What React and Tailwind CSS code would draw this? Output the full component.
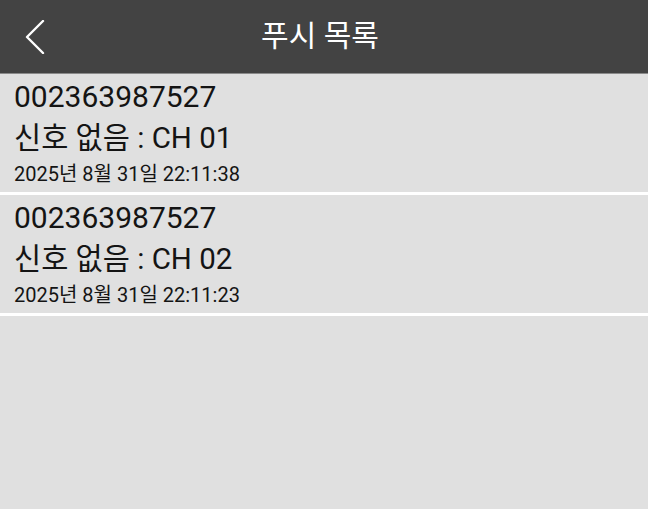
import React from "react";

const items = [
  { id: "002363987527", msg: "신호 없음 : CH 01", time: "2025년 8월 31일 22:11:38" },
  { id: "002363987527", msg: "신호 없음 : CH 02", time: "2025년 8월 31일 22:11:23" },
];

const font = { fontFamily: "Roboto, 'Noto Sans CJK KR', sans-serif" };

const App = () => {
  return (
    <div className="w-[648px] h-[509px] bg-[#e0e0e0] flex flex-col" style={font}>
      <div className="h-[74px] shrink-0 bg-[#434343] border-b border-[#8a8a8a] grid grid-cols-[1fr_auto_1fr] items-center">
        <div className="pl-[25px] flex items-center">
          <svg width="20" height="34" viewBox="0 0 20 34" fill="none">
            <polyline
              points="18,1 2,17 18,33"
              stroke="#ffffff"
              strokeWidth="2.4"
              strokeLinecap="round"
              strokeLinejoin="round"
            />
          </svg>
        </div>
        <div className="text-white text-[30px] font-normal leading-none pb-[1px] pr-[8px]">푸시 목록</div>
        <div />
      </div>

      {items.map((item, i) => (
        <div key={i} className="border-b-[3px] border-white">
          <div className="h-[118px] pl-[14px] pt-[3px] text-[#141414]">
            <div className="text-[30px] leading-[40px]">{item.id}</div>
            <div className="text-[29.5px] leading-[42px]">{item.msg}</div>
            <div className="text-[20px] leading-[30px]">{item.time}</div>
          </div>
        </div>
      ))}
    </div>
  );
};

export default App;
